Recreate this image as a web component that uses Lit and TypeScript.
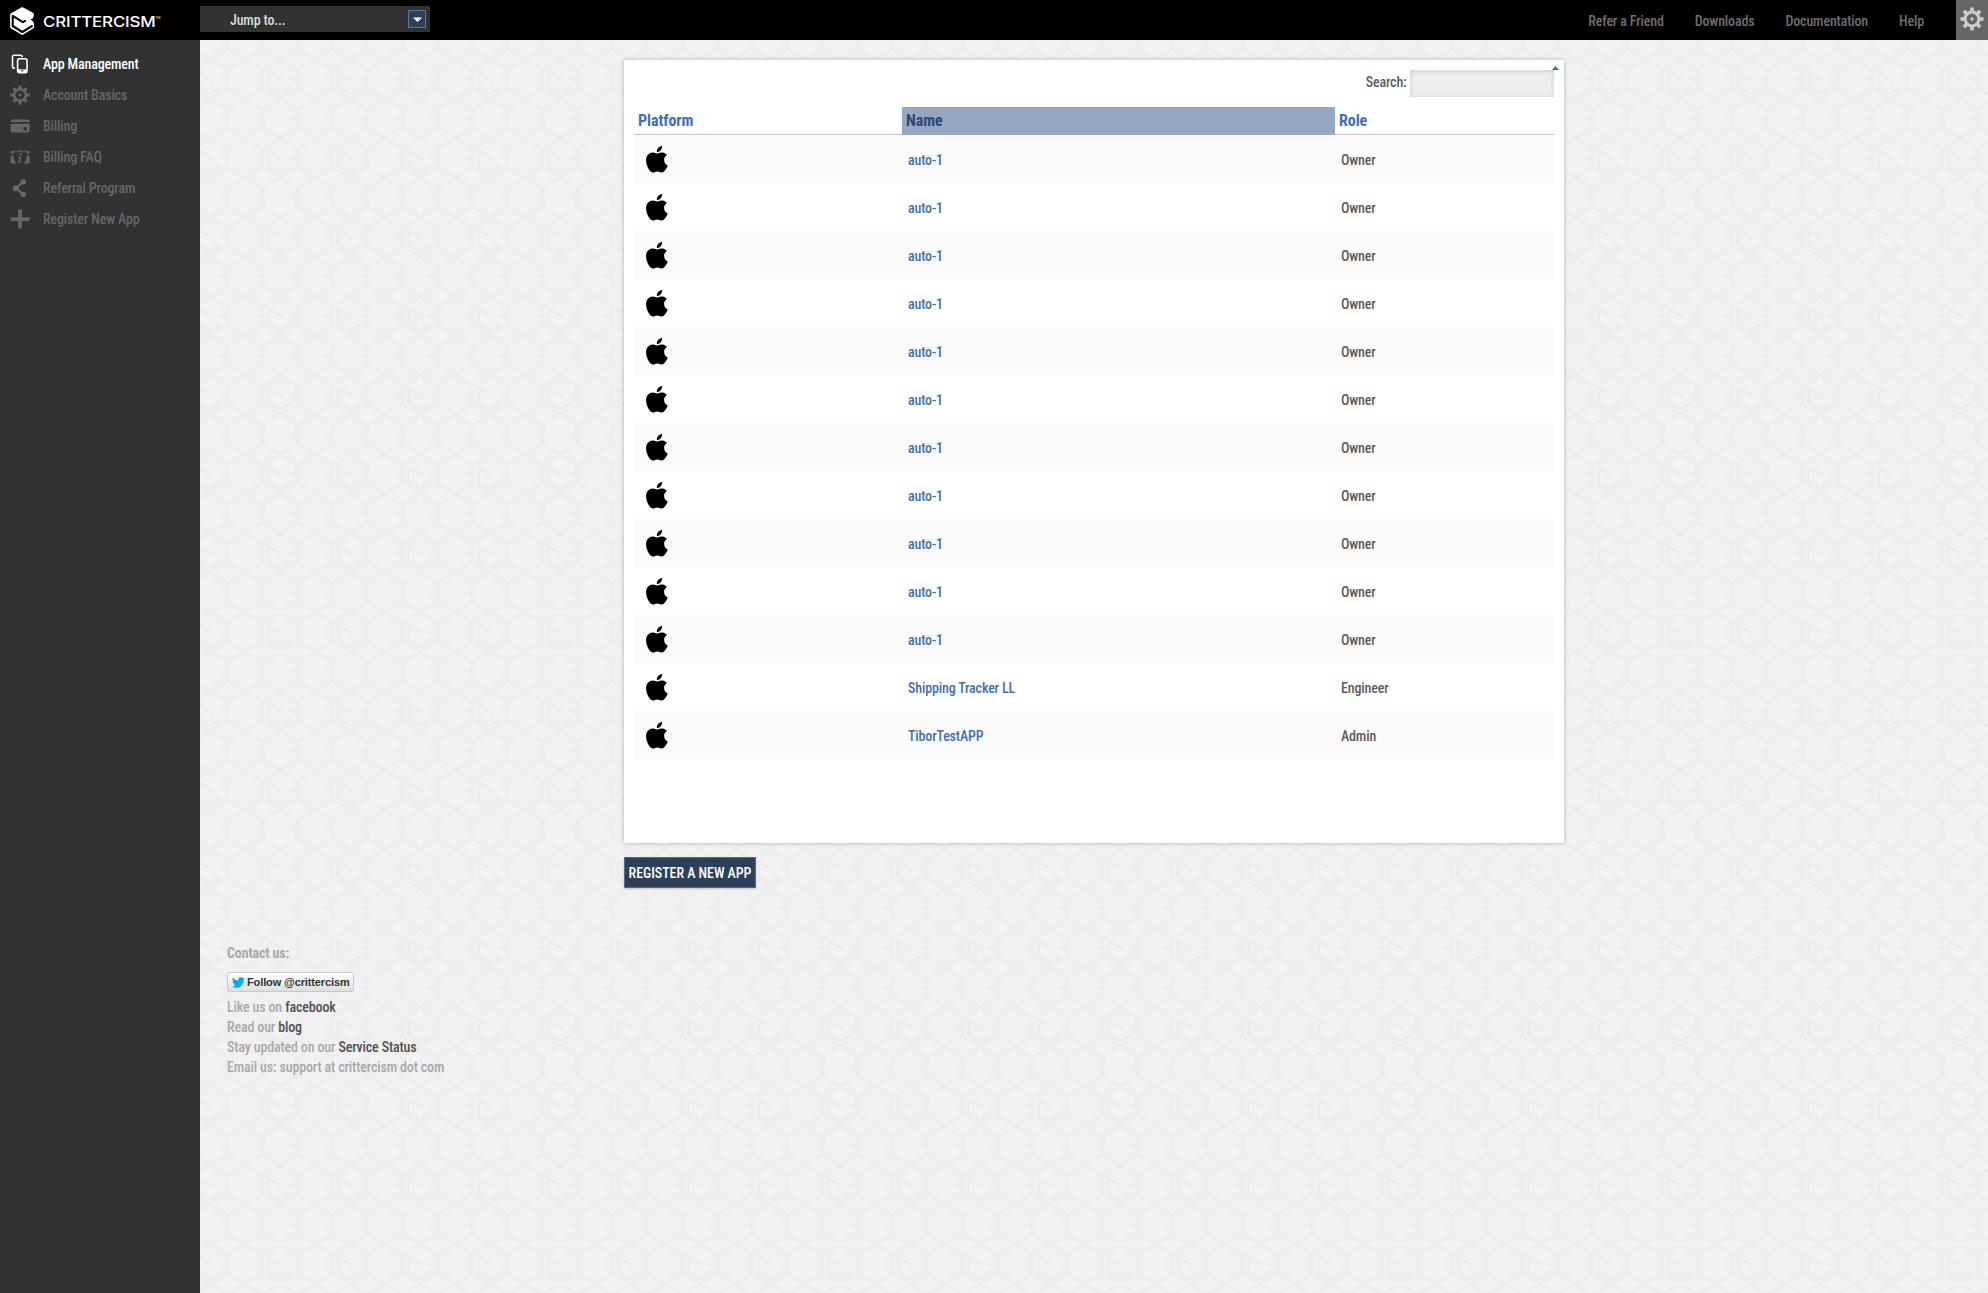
import { LitElement, html, css, svg, unsafeCSS } from "lit";
import { customElement } from "lit/decorators.js";

/* Tileable honeycomb used behind the page content. */
const HEX = "M0 -19.2 L16.9 -9.6 V9.6 L0 19.2 L-16.9 9.6 V-9.6 Z";
const cell = (x: number, y: number) =>
  `<g transform="translate(${x} ${y})"><path d="${HEX}" fill="none" stroke="#ededed" stroke-width="2.8"/><path d="M17 -4.5 L8.5 0 L17 4.5Z" fill="#ededed"/></g>`;
const cells = [-17, 18, 53, 88]
  .map((x) => [-19.5, 20, 59.5, 99].map((y) => cell(x, y)).join(""))
  .join("");
const TILE = encodeURIComponent(
  `<svg xmlns="http://www.w3.org/2000/svg" width="70" height="79"><rect width="70" height="79" fill="#f1f1f1"/>${cells}<path transform="translate(18 20)" d="M1.7 1 L-11.8 -7 V7.6 L0 14.4 L9.8 8.4" fill="none" stroke="#ececec" stroke-width="3" stroke-linecap="round"/></svg>`
);

const gear = (size: number) => html`<svg width=${size} height=${size} viewBox="-12 -12 24 24">
  <g fill="currentColor">
    ${[0, 45, 90, 135, 180, 225, 270, 315].map(
      (a) => svg`<path transform="rotate(${a})" d="M-2 -7 L-1.7 -11.5 H1.7 L2 -7Z"></path>`
    )}
    <circle r="1.7"></circle>
  </g>
  <circle r="6.9" fill="none" stroke="currentColor" stroke-width="3"></circle>
</svg>`;

const apple = html`<svg width="21.7" height="26.5" viewBox="2.2 0 19.6 24" preserveAspectRatio="none">
  <path d="M12.152 6.896c-.948 0-2.415-1.078-3.96-1.04-2.04.027-3.91 1.183-4.961 3.014-2.117 3.675-.546 9.103 1.519 12.09 1.013 1.454 2.208 3.09 3.792 3.039 1.52-.065 2.09-.987 3.935-.987 1.831 0 2.35.987 3.96.948 1.637-.026 2.676-1.48 3.676-2.948 1.156-1.688 1.636-3.325 1.662-3.415-.039-.013-3.182-1.221-3.22-4.857-.026-3.04 2.48-4.494 2.597-4.559-1.429-2.09-3.623-2.324-4.39-2.376-2-.156-3.675 1.09-4.61 1.09zM15.53 3.83c.843-1.012 1.4-2.427 1.245-3.83-1.207.052-2.662.805-3.532 1.818-.78.896-1.454 2.338-1.273 3.714 1.338.104 2.715-.688 3.559-1.701"></path>
</svg>`;

const icon = (body: unknown) => html`<svg width="20" height="20" viewBox="0 0 20 20">${body}</svg>`;

const ICONS = {
  apps: icon(svg`
    <path d="M5 14.2H4.2A1.7 1.7 0 0 1 2.5 12.5V3A1.7 1.7 0 0 1 4.2 1.3H10.5A1.7 1.7 0 0 1 12.2 3" fill="none" stroke="currentColor" stroke-width="1.6"></path>
    <rect x="7.6" y="4.8" width="9.4" height="13.8" rx="1.8" fill="none" stroke="currentColor" stroke-width="1.6"></rect>
    <path d="M7.5 15.4H17V18H7.5Z" fill="currentColor"></path>
    <rect x="11.2" y="16.2" width="2.2" height="1.2" fill="#323232"></rect>`),
  gear: gear(20),
  card: icon(svg`
    <path d="M.6 6V5.4A1.8 1.8 0 0 1 2.4 3.6H17.8A1.8 1.8 0 0 1 19.6 5.4V6Z" fill="currentColor"></path>
    <path fill-rule="evenodd" d="M.6 7.8H19.6V14.8A1.8 1.8 0 0 1 17.8 16.6H2.4A1.8 1.8 0 0 1 .6 14.8ZM13.4 11V14.4H17V11Z" fill="currentColor"></path>`),
  faq: icon(svg`
    <path d="M.6 6.6V5.4A1.8 1.8 0 0 1 2.4 3.8H6Q4.4 4.8 3.8 6.6Z M19.6 6.6V5.4A1.8 1.8 0 0 0 17.8 3.8H14.2Q15.8 4.8 16.4 6.6Z" fill="currentColor"></path>
    <path d="M.6 8.2H3.4Q3 13.5 6.8 16.6H2.4A1.8 1.8 0 0 1 .6 14.8Z M19.6 8.2H16.8Q17.2 13.5 13.4 16.6H17.8A1.8 1.8 0 0 0 19.6 14.8Z" fill="currentColor"></path>
    <path d="M6.6 5Q10 2.6 13.6 5" fill="none" stroke="currentColor" stroke-width="1.2"></path>
    <circle cx="10.8" cy="7.2" r="1.2" fill="currentColor"></circle>
    <path d="M8.6 9.6H11.2L9.6 15.8H8L9.3 10.8H8.3Z M9.2 14.4L11.4 14.2L10.8 15.6L9 15.8Z" fill="currentColor"></path>`),
  share: icon(svg`
    <path d="M13.2 3.8L6 10.2L13.2 16.4" fill="none" stroke="currentColor" stroke-width="2.2"></path>
    <circle cx="13.4" cy="3.8" r="2.7" fill="currentColor"></circle>
    <circle cx="5.8" cy="10.2" r="2.9" fill="currentColor"></circle>
    <circle cx="13.4" cy="16.4" r="2.7" fill="currentColor"></circle>`),
  plus: icon(svg`<path d="M8.2 .6H11.9V8.3H19.5V12H11.9V19.5H8.2V12H.6V8.3H8.2Z" fill="currentColor"></path>`),
};

const NAV: [string, unknown][] = [
  ["App Management", ICONS.apps],
  ["Account Basics", ICONS.gear],
  ["Billing", ICONS.card],
  ["Billing FAQ", ICONS.faq],
  ["Referral Program", ICONS.share],
  ["Register New App", ICONS.plus],
];

const APPS: [string, string][] = [
  ...Array.from({ length: 11 }, (): [string, string] => ["auto-1", "Owner"]),
  ["Shipping Tracker LL", "Engineer"],
  ["TiborTestAPP", "Admin"],
];

const base = css`
  * { box-sizing: border-box; }
  svg { display: block; }
  a { color: inherit; text-decoration: none; }
`;

@customElement("top-bar")
class TopBar extends LitElement {
  static styles = [base, css`
    :host { display: flex; height: 40px; background: #000; color: #707070; }
    .brand { display: flex; width: 200px; padding: 6px 0 0 9px; }
    .word { display: flex; padding-left: 6px; color: #fff; }
    .jump { display: flex; justify-content: space-between; width: 230px; height: 26px; margin-top: 6px; padding: 4px 4px 0 30px; background: #323232; color: #ddd; line-height: 20px; }
    .arrow { display: flex; align-items: center; justify-content: center; width: 18px; height: 18px; border: 1px solid #557a9c; background: #2e4059; }
    .links { display: flex; flex: 1; justify-content: flex-end; gap: 31px; padding: 11px 32px 0 0; line-height: 20px; }
    .settings { display: flex; justify-content: center; width: 32px; padding: 7px 1px 0 0; background: #666; color: #ccc; }
  `];
  render() {
    return html`
      <div class="brand">
        <svg width="27" height="30" viewBox="-13.3 -15 27 30">
          <path d="M0 -14 L10.6 -8.2 Q11.8 -7.4 11.7 -5.6 Q11.4 -3 8.2 -1.2 Q11.6 .3 11.8 3.2 V5.8 Q11.8 6.9 10.8 7.5 L1 13.4 Q0 14 -1 13.4 L-11.2 7.4 Q-12.2 6.8 -12.2 5.6 V-6 Q-12.2 -7.2 -11.2 -7.8Z" fill="#fff"></path>
          <path d="M2.8 -.2 L.6 1.2 L-9.6 -5.2 V5 L0 11 L9.6 5.2" fill="none" stroke="#000" stroke-width="2.1" stroke-linecap="round" stroke-linejoin="round"></path>
        </svg>
        <div class="word">
          <svg width="124" height="28" viewBox="0 0 124 28">
            <text x="1" y="20.7" font-family="Inter, sans-serif" font-size="14.4" font-weight="550" textLength="112.5" lengthAdjust="spacingAndGlyphs" fill="#fff">CRITTERCISM</text>
            <text x="113" y="12.5" font-family="Inter, sans-serif" font-size="3.6" fill="#ccc">TM</text>
          </svg>
        </div>
      </div>
      <div class="jump"><span>Jump to...</span>
        <span class="arrow"><svg width="9" height="5" viewBox="0 0 9 5"><path d="M0 .5H9L4.5 5Z" fill="#fff"></path></svg></span>
      </div>
      <nav class="links">
        <a>Refer a Friend</a><a>Downloads</a><a>Documentation</a><a>Help</a>
      </nav>
      <div class="settings">${gear(24)}</div>
    `;
  }
}

@customElement("side-nav")
class SideNav extends LitElement {
  static styles = [base, css`
    :host { display: block; width: 200px; padding-top: 8px; background: #323232; color: #666; }
    .item { display: flex; align-items: center; gap: 13px; height: 31px; padding-left: 10px; }
    .item.on { color: #fff; }
  `];
  render() {
    return NAV.map(([label, glyph], i) => html`<a class="item ${i === 0 ? "on" : ""}">${glyph}<span>${label}</span></a>`);
  }
}

@customElement("app-table")
class AppTable extends LitElement {
  static styles = [base, css`
    :host { display: block; width: 940px; height: 783px; padding: 10px 10px 0; background: #fff; box-shadow: 0 0 4px rgba(0, 0, 0, 0.28); color: #5c5c5c; }
    .search { display: flex; justify-content: flex-end; height: 37px; gap: 3.5px; position: relative; }
    .search label { line-height: 25px; }
    .field { width: 144px; height: 27px; background: #ededed; box-shadow: inset 0 1px 4px rgba(0, 0, 0, 0.16); }
    .corner { position: absolute; right: -5px; top: -4px; }
    .row { display: grid; grid-template-columns: 268px 433px 219px; height: 48px; align-items: center; }
    .row:nth-child(odd) { background: #fafafa; }
    .row > * { padding: 2px 0 0 6px; }
    .row > .plat { padding: 1px 0 0 12px; }
    .name, .head { color: #426eb3; }
    .head { display: grid; grid-template-columns: 268px 433px 219px; height: 28px; font-size: 16px; font-weight: 700; line-height: 27px; border-bottom: 1px solid #c6c6c6; letter-spacing: -0.08px; }
    .head > * { padding-left: 4px; height: 28px; }
    .sorted { background: #96a8c1; color: #2b4a73; }
  `];
  render() {
    return html`
      <div class="search"><label>Search:</label><span class="field"></span>
        <svg class="corner" width="7" height="4" viewBox="0 0 7 4"><path d="M0 4L3.5 0L7 4Z" fill="#2277bb"></path></svg>
      </div>
      <div class="head"><span>Platform</span><span class="sorted">Name</span><span>Role</span></div>
      <div>${APPS.map(([name, role]) => html`<div class="row"><span class="plat">${apple}</span><a class="name">${name}</a><span>${role}</span></div>`)}</div>
    `;
  }
}

@customElement("contact-block")
class ContactBlock extends LitElement {
  static styles = [base, css`
    :host { display: block; color: #a8a8a8; line-height: 20px; }
    .title { font-weight: 700; letter-spacing: -0.15px; }
    .follow { display: flex; align-items: center; gap: 2px; width: 127px; height: 20px; margin: 9px 0 5px; padding-left: 4px; border: 1px solid #c8c8c8; border-radius: 3px; background: linear-gradient(#fff, #dedede); color: #333; font: bold 11px/18px "Liberation Sans", Arial, sans-serif; letter-spacing: -0.12px; white-space: nowrap; }
    .line a { color: #505050; }
  `];
  render() {
    return html`
      <div class="title">Contact us:</div>
      <a class="follow"><svg width="13" height="13" viewBox="0 0 24 24"><path fill="#00a8ec" d="M23.953 4.57a10 10 0 01-2.825.775 4.958 4.958 0 002.163-2.723c-.951.555-2.005.959-3.127 1.184a4.92 4.92 0 00-8.384 4.482C7.69 8.095 4.067 6.13 1.64 3.162a4.822 4.822 0 00-.666 2.475c0 1.71.87 3.213 2.188 4.096a4.904 4.904 0 01-2.228-.616v.06a4.923 4.923 0 003.946 4.827 4.996 4.996 0 01-2.212.085 4.936 4.936 0 004.604 3.417 9.867 9.867 0 01-6.102 2.105c-.39 0-.779-.023-1.17-.067a13.995 13.995 0 007.557 2.209c9.053 0 13.998-7.496 13.998-13.985 0-.21 0-.42-.015-.63A9.935 9.935 0 0024 4.59z"></path></svg><span>Follow @crittercism</span></a>
      <div class="line">Like us on <a>facebook</a></div>
      <div class="line">Read our <a>blog</a></div>
      <div class="line">Stay updated on our <a>Service Status</a></div>
      <div class="line">Email us: support at crittercism dot com</div>
    `;
  }
}

@customElement("app-root")
class AppRoot extends LitElement {
  static styles = [base, css`
    :host { display: flex; flex-direction: column; height: 100vh; overflow: hidden; font: 500 14px/20px "Roboto Condensed", Roboto, "Liberation Sans", sans-serif; letter-spacing: -0.15px; }
    .body { display: flex; flex: 1; }
    .main { flex: 1; padding: 20px 0 0 27px; background: url("data:image/svg+xml,${unsafeCSS(TILE)}") -8px 19px; }
    .content { width: 940px; margin: 0 0 0 397px; }
    .register { display: flex; align-items: center; justify-content: center; width: 132px; height: 31px; margin: 14px 0 55px; border: 1px solid #4c7190; background: #2e4059; color: #fff; letter-spacing: -0.05px; box-shadow: 0 1px 2px rgba(0, 0, 0, 0.2); white-space: nowrap; }
  `];
  render() {
    return html`
      <top-bar></top-bar>
      <div class="body">
        <side-nav></side-nav>
        <main class="main">
          <div class="content">
            <app-table></app-table>
            <a class="register">REGISTER A NEW APP</a>
          </div>
          <contact-block></contact-block>
        </main>
      </div>
    `;
  }
}
